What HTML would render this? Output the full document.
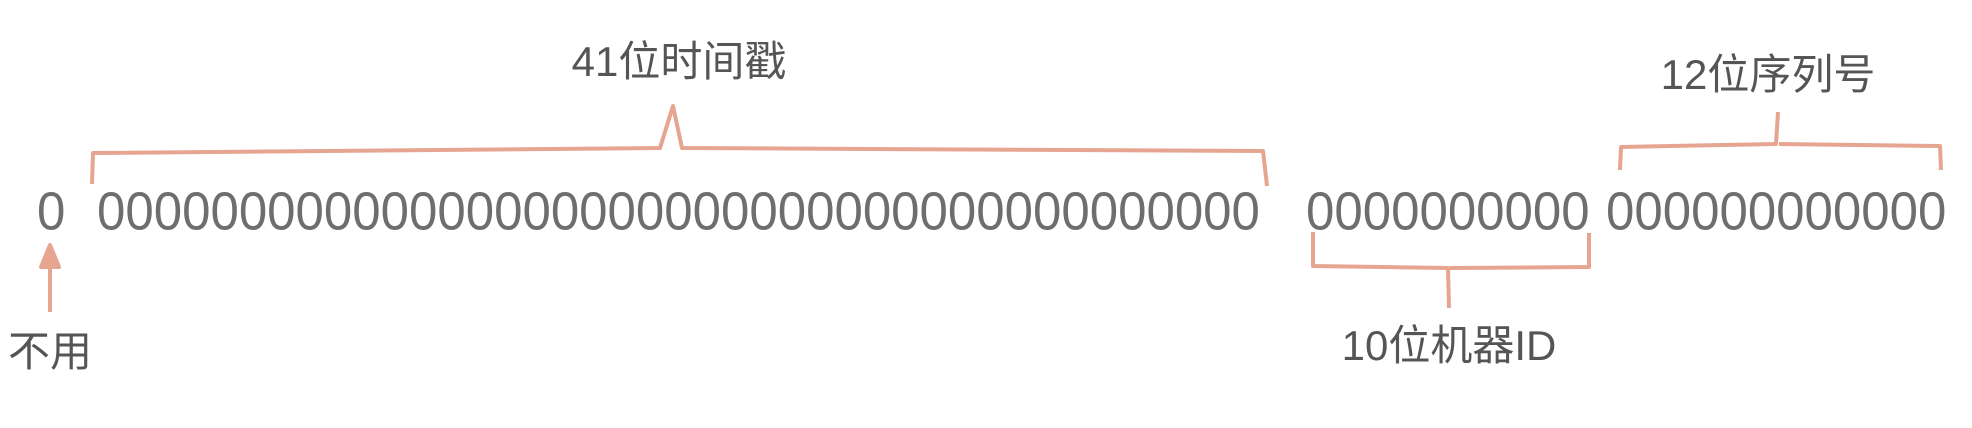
<!DOCTYPE html>
<html><head><meta charset="utf-8"><style>
html,body{margin:0;padding:0;background:#fff;}
body{width:1972px;height:428px;position:relative;overflow:hidden;}
.z{position:absolute;top:180px;font-family:"Liberation Sans",sans-serif;font-size:51px;color:#6e6e6e;line-height:60px;white-space:nowrap;letter-spacing:0;transform:scaleY(1.05);transform-origin:top left;}
.t{position:absolute;font-family:"Liberation Sans","Noto Sans CJK SC",sans-serif;font-size:42px;color:#555;line-height:46px;white-space:nowrap;transform:translateX(-50%);}
svg{position:absolute;left:0;top:0;}
</style></head><body>
<div class="z" style="left:37px">0</div>
<div class="z" style="left:97px">00000000000000000000000000000000000000000</div>
<div class="z" style="left:1306px">0000000000</div>
<div class="z" style="left:1606px">000000000000</div>
<svg width="1972" height="428" fill="none" stroke="#e6a590" stroke-width="4" stroke-linejoin="round">
<path d="M92 184 L93 153 L660 148 L673 106 L682 148 L1263 151 L1267 186"/>
<path d="M1620 170 L1621 147 L1776 144 L1778 112 M1779 144 L1940 146 L1941 170"/>
<path d="M1313 232 L1313 266 L1448 268 L1449 308 M1450 268 L1589 267 L1589 233"/>
<path d="M50 312 L50 268"/>
<path d="M41 267 L50 245 L59 267 Z" fill="#e6a590"/>
</svg>
<div class="t" style="left:679px;top:39px">41位时间戳</div>
<div class="t" style="left:1768px;top:52px">12位序列号</div>
<div class="t" style="left:1449px;top:323px">10位机器ID</div>
<div class="t" style="left:50px;top:329px">不用</div>
</body></html>
